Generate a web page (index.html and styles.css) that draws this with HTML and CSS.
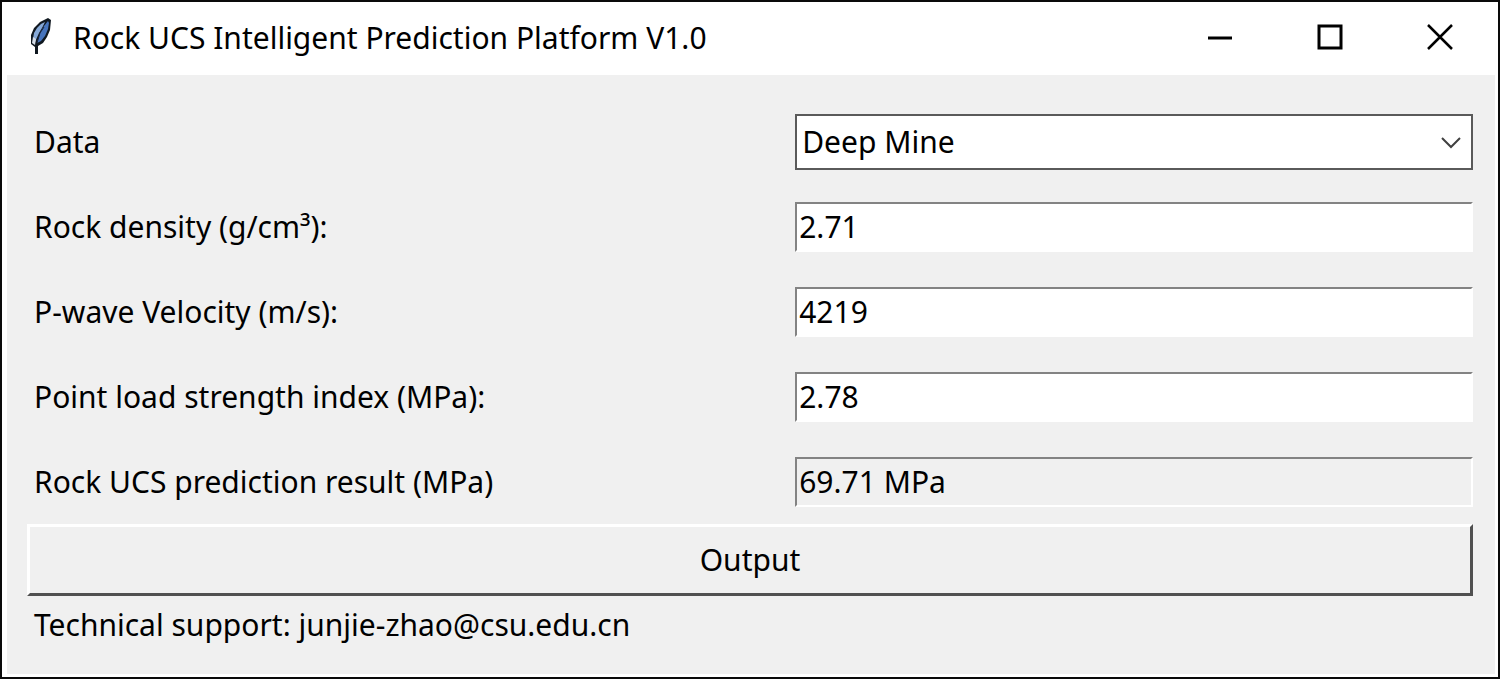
FILE: index.html
```html
<!DOCTYPE html>
<html lang="en">
<head>
<meta charset="utf-8">
<meta name="viewport" content="width=device-width, initial-scale=1.0">
<title>Rock UCS Intelligent Prediction Platform V1.0</title>
<link rel="stylesheet" href="styles.css">
</head>
<body>

<div class="window">
    <header class="titlebar">
        <svg class="feather" viewBox="0 0 24 40" aria-hidden="true">
            <path d="M19 1 L22 3 L21 13 L18 20 L14 26 L9 29 L9 37 L6 37 L6 30 L2 27 L2 18 L5 11 L11 5 Z" fill="#101820"/>
            <path d="M19 4 L20 6 L19 12 L16 19 L12 24 L8 26 L11 16 L15 9 Z" fill="#4674bd"/>
            <path d="M16 5 L13 11 L10 16 L6 25 L4 22 L5 16 L8 11 L12 7 Z" fill="#86a9d8"/>
            <path d="M4 20 L7 22 L6 28 L3 26 Z" fill="#d5dde8"/>
            <path d="M15 10 L11 16 L8 26" fill="none" stroke="#16233c" stroke-width="1"/>
        </svg>
        <h1>Rock UCS Intelligent Prediction Platform V1.0</h1>
        <div class="controls">
            <button type="button" aria-label="Minimize">
                <svg viewBox="0 0 26 26"><path d="M1 14H25" stroke-width="3"/></svg>
            </button>
            <button type="button" aria-label="Maximize">
                <svg viewBox="0 0 26 26"><rect x="2" y="2" width="22" height="22" stroke-width="3"/></svg>
            </button>
            <button type="button" aria-label="Close">
                <svg viewBox="0 0 26 26"><path d="M1 1L25 25M25 1L1 25" stroke-width="2.5"/></svg>
            </button>
        </div>
    </header>
    <form class="content">
        <div class="row">
            <label for="data">Data</label>
            <div class="combo">
                <select id="data">
                    <option>Deep Mine</option>
                </select>
                <svg class="arrow" viewBox="0 0 20 12" aria-hidden="true"><path d="M1 1L10 10L19 1"/></svg>
            </div>
        </div>
        <div class="row">
            <label for="density">Rock density (g/cm³):</label>
            <input type="text" id="density" value="2.71">
        </div>
        <div class="row">
            <label for="velocity">P-wave Velocity (m/s):</label>
            <input type="text" id="velocity" value="4219">
        </div>
        <div class="row">
            <label for="strength">Point load strength index (MPa):</label>
            <input type="text" id="strength" value="2.78">
        </div>
        <div class="row">
            <label for="result">Rock UCS prediction result (MPa)</label>
            <input type="text" id="result" value="69.71 MPa" readonly>
        </div>
        <button type="button" class="output">Output</button>
        <p class="support">Technical support: junjie-zhao@csu.edu.cn</p>
    </form>
</div>

</body>
</html>
```
FILE: styles.css
```css
* {
    box-sizing: border-box;
}
body {
    margin: 0;
    font-family: "Noto Sans", "Liberation Sans", sans-serif;
    font-size: 30px;
    color: #000;
}
.window {
    display: flex;
    flex-direction: column;
    min-height: 100vh;
    padding: 0 3px 3px 5px;
    border: 2px solid #0a0a0a;
    background-color: #fff;
}
.titlebar {
    display: flex;
    align-items: center;
    height: 73px;
    padding: 0 0 3px 22px;
}
.feather {
    width: 24px;
    height: 40px;
}
h1 {
    flex: 1;
    margin: 0 0 0 20px;
    font-size: 30px;
    font-weight: normal;
}
.controls {
    display: flex;
}
.controls button {
    width: 110px;
    height: 68px;
    padding: 0;
    border: 0;
    background: none;
}
.controls svg {
    display: block;
    width: 26px;
    height: 26px;
    margin: 0 auto;
    fill: none;
    stroke: #000;
}
.content {
    flex: 1;
    padding: 24px 22px 0 20px;
    background-color: #f0f0f0;
}
.row {
    display: grid;
    grid-template-columns: 17fr 15fr;
    align-items: center;
    height: 85px;
}
label {
    padding-left: 7px;
}
input, select, .output {
    width: 100%;
    font: inherit;
    color: inherit;
    border-radius: 0;
    outline: none;
}
input {
    height: 50px;
    padding: 0 2px;
    border: 2px solid #fff;
    border-top-color: #838383;
    border-left-color: #838383;
    background-color: #fff;
}
input[readonly] {
    background-color: #f0f0f0;
}
.combo {
    position: relative;
}
select {
    display: block;
    height: 56px;
    padding: 0 5px;
    border: 2px solid #5a5a5a;
    background-color: #fff;
    appearance: none;
}
.arrow {
    position: absolute;
    top: 23px;
    right: 12px;
    width: 20px;
    height: 12px;
    fill: none;
    stroke: #404040;
    stroke-width: 2;
    pointer-events: none;
}
.output {
    display: block;
    height: 72px;
    padding: 0 0 2px;
    border: 3px solid #fff;
    border-right-color: #505050;
    border-bottom-color: #505050;
    background-color: #f0f0f0;
}
.support {
    margin: 0;
    padding-left: 7px;
    line-height: 58px;
}
```
